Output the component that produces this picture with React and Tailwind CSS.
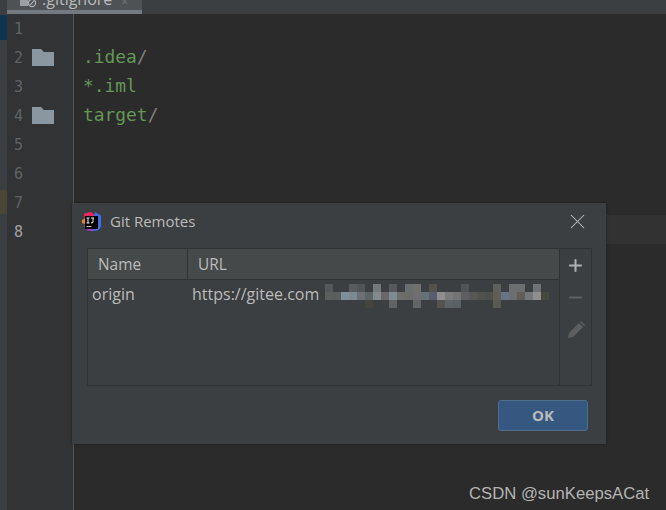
import { X, Plus, Minus } from 'lucide-react'

const gutterRows = [
  { n: 1 },
  { n: 2, folder: true, text: '.idea', slash: true },
  { n: 3, text: '*.iml' },
  { n: 4, folder: true, text: 'target', slash: true },
  { n: 5 },
  { n: 6 },
  { n: 7 },
  { n: 8, active: true },
]

// colour cells of the smudged part of the URL
const mosaic = [
  ['#55585a', null, null, '#585c5e', '#525557', null, '#73787a', null, '#55595b', null, '#686e70', '#6e706c', null, '#55524c', null, null, null, '#505456', null, null, null, '#5f5f5d', null, '#6c6e70', '#6c6e70', null, '#6f7375', null],
  ['#5c5e60', '#5c5c5c', '#7e8e98', '#7a8a94', '#6a7074', '#5e6466', '#838a8d', '#6a6668', '#7c8a92', '#6f6c6c', '#6a6c68', '#706e72', '#677074', '#585c70', '#8e8e8e', '#7a7c7c', '#737476', '#5c5e60', '#565856', '#52534f', '#4e504c', '#625d55', '#6a7288', '#6c6e70', '#635d58', '#74787e', '#8e8e8e', '#474840'],
  [null, null, null, null, null, '#45443e', null, null, '#606264', null, null, '#626466', null, null, '#545350', '#5c6468', '#5a6064', null, null, null, null, '#5a5a55', null, null, null, null, null, null],
]

function Folder() {
  return (
    <svg width="22" height="17" viewBox="0 0 22 17" className="shrink-0">
      <path d="M0 0h9l3 3h10v14H0z" fill="#8a96a0" />
    </svg>
  )
}

function TabIcon() {
  return (
    <svg width="20" height="10" viewBox="0 0 20 10" className="shrink-0">
      <rect x="0" y="0" width="8" height="6" fill="#9aa0a4" />
      <circle cx="12" cy="3" r="3.6" fill="#4e5254" stroke="#afb1b3" strokeWidth="1.2" />
      <path d="M9.8 5.2l4.4-4.4" stroke="#afb1b3" strokeWidth="1.2" />
    </svg>
  )
}

function IdeaLogo() {
  return (
    <svg width="19" height="19" viewBox="0 0 19 19" className="shrink-0">
      <path d="M2 1.5L9 0l4 3-3 14-7-1z" fill="#e8285f" />
      <path d="M0 8l3-1.500V12l-3-1z" fill="#f58220" />
      <path d="M13 0l6 3.500V15l-3 3.500-7 .500z" fill="#3f6de8" />
      <path d="M2 14h9v5l-6-.500z" fill="#a63cc8" />
      <rect x="3" y="4" width="13" height="13" fill="#000" />
      <rect x="4.500" y="14" width="5" height="1" fill="#bbb" />
      <path d="M4.500 6h3M6 6v5M4.500 11h3M9 6h3M11 6v4.500l-2 .500" stroke="#eee" strokeWidth="1" fill="none" />
    </svg>
  )
}

function Mosaic() {
  return (
    <svg width="224" height="24" viewBox="0 0 224 24" className="mt-[4px] block shrink-0">
      {mosaic.map((row, y) =>
        row.map((c, x) => c && <rect key={`${x}-${y}`} x={x * 8} y={y * 8} width="8" height="8" fill={c} />)
      )}
    </svg>
  )
}

export default function App() {
  return (
    <div className="relative flex h-[510px] w-[666px] flex-col overflow-hidden bg-[#2b2b2b]">
      {/* tab bar */}
      <div className="flex h-[14px] shrink-0 bg-[#3c3f41] pl-[7px]">
        <div className="flex h-[14px] w-[135px] items-start overflow-hidden border-b-[4px] border-[#747a80] bg-[#4e5254] pl-[13px]">
          <TabIcon />
          <span className="-mt-[9px] ml-[2px] font-['Open_Sans',sans-serif] text-[16px] leading-[16px] text-[#bbbbbb]">.gitignore</span>
          <span className="-mt-[4px] ml-[9px] text-[12px] leading-[12px] text-[#6e7072]">×</span>
        </div>
      </div>

      <div className="flex min-h-0 flex-1">
        {/* left strip */}
        <div className="flex w-[7px] shrink-0 flex-col bg-[#3c3f41]">
          <div className="mt-[1px] h-[25px] bg-[#0f3650]" />
          <div className="mt-[150px] h-[24px] bg-[#4a4636]" />
        </div>

        {/* gutter */}
        <div className="w-[67px] shrink-0 border-r border-[#555555] bg-[#313335]">
          {gutterRows.map((r) => (
            <div key={r.n} className="flex h-[29px] items-center">
              <span className={`mt-[2px] w-[16px] text-right font-['DejaVu_Sans_Mono',monospace] text-[15px] ${r.active ? 'text-[#a4a3a3]' : 'text-[#606366]'}`}>
                {r.n}
              </span>
              {r.folder && <span className="ml-[9px]"><Folder /></span>}
            </div>
          ))}
        </div>

        {/* editor */}
        <div className="-mt-[2px] flex-1 font-['DejaVu_Sans_Mono',monospace] text-[17.9px]">
          {gutterRows.map((r) => (
            <div key={r.n} className={`flex h-[29px] items-center pl-[9px] pt-[4px] ${r.active ? 'bg-[#323232]' : ''}`}>
              <span className="text-[#629755]">{r.text}</span>
              {r.slash && <span className="text-[#808080]">/</span>}
            </div>
          ))}
        </div>
      </div>

      {/* dialog */}
      <div className="absolute left-[72px] top-[203px] flex h-[241px] w-[534px] flex-col bg-[#3c3f41] font-['Open_Sans',sans-serif] text-[#bbbbbb] shadow-[0_0_3px_rgba(0,0,0,0.35)]">
        <div className="flex h-[37px] shrink-0 items-center pl-[10px] pr-[16px]">
          <IdeaLogo />
          <span className="ml-[9px] text-[15px]">Git Remotes</span>
          <X className="ml-auto text-[#bbbbbb]" size={25} strokeWidth={1} />
        </div>

        <div className="ml-[15px] mr-[14px] mt-[8px] flex h-[138px] shrink-0 border border-[#323232]">
          <div className="flex min-w-0 flex-1 flex-col border-r border-[#323232]">
            <div className="flex h-[31px] shrink-0 items-center border-b border-[#323232] bg-[#45494a] text-[15.4px]">
              <div className="flex h-full w-[100px] items-center border-r border-[#323232] pl-[10px] pt-[2px]">Name</div>
              <div className="pl-[10px] pt-[2px]">URL</div>
            </div>
            <div className="flex h-[28px] items-center text-[16px]">
              <div className="w-[104px] pl-[4px]">origin</div>
              <div className="w-[133px] whitespace-nowrap">https://gitee.com</div>
              <Mosaic />
            </div>
          </div>
          <div className="flex w-[31px] shrink-0 flex-col items-center gap-[13px] pt-[7px]">
            <Plus size={19} strokeWidth={2.6} className="text-[#afb1b3]" />
            <Minus size={19} strokeWidth={2.6} className="text-[#5c5e60]" />
            <svg width="20" height="20" viewBox="0 0 20 20">
              <path d="M2 18l1-5L13 3l4 4L7 17zM14 2l1-1 4 4-1 1z" fill="#5c5e60" />
            </svg>
          </div>
        </div>

        <div className="flex flex-1 items-center justify-end pr-[18px]">
          <button className="h-[31px] w-[90px] rounded-[3px] border border-[#4c708c] bg-[#365880] text-[15px] font-bold text-[#bbbbbb]">
            OK
          </button>
        </div>
      </div>

      {/* watermark */}
      <span className="absolute left-[469px] top-[481px] font-['Liberation_Sans',sans-serif] text-[16.7px] text-[#b4b4b4]">
        CSDN @sunKeepsACat
      </span>
    </div>
  )
}
